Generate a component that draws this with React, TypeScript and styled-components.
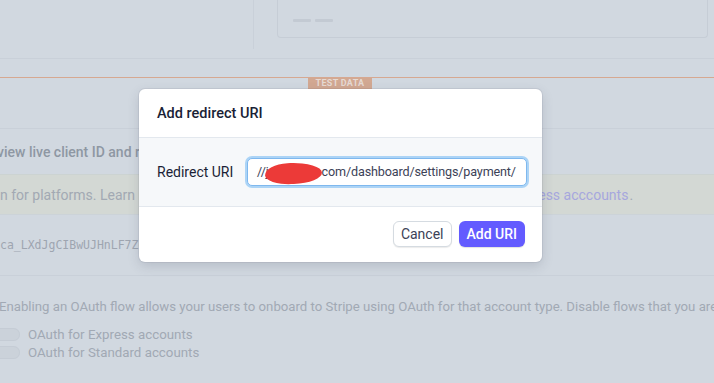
import styled, {createGlobalStyle} from 'styled-components';

const GlobalStyle = createGlobalStyle`
  html, body {
    margin: 0;
    padding: 0;
    background: #d1d8e0;
  }
  body {
    font-family: Roboto, "Noto Sans", sans-serif;
    -webkit-font-smoothing: antialiased;
  }
`;

const Page = styled.div`
  position: relative;
  width: 714px;
  height: 383px;
  overflow: hidden;
  background: #d1d8e0;
  color: #9ca4b0;
`;

const TopRow = styled.div`
  display: flex;
  height: 59px;
  border-bottom: 1px solid #c9d0d9;
  box-sizing: border-box;
`;

const SidePane = styled.div`
  width: 254px;
  height: 49px;
  border-right: 1px solid #c9d0d9;
  box-sizing: border-box;
`;

const Card = styled.div`
  margin-left: 23px;
  width: 431px;
  height: 38px;
  border: 1px solid #c6cdd6;
  border-top: none;
  border-radius: 0 0 4px 4px;
  box-sizing: border-box;
  display: flex;
  align-items: flex-end;
  gap: 4px;
  padding: 0 0 15px 15px;
`;

const Dash = styled.span`
  width: 18px;
  height: 3px;
  border-radius: 1px;
  background: #c3cad3;
`;

const TestBar = styled.div`
  display: flex;
  align-items: flex-start;
  margin-top: 18px;
  border-top: 1px solid #d6a891;
  height: 50px;
`;

const TestTag = styled.span`
  margin-left: 308px;
  width: 64px;
  height: 11px;
  line-height: 11px;
  background: #d2a892;
  color: #e6dad4;
  font-size: 9px;
  font-weight: 700;
  text-align: center;
  letter-spacing: 0.3px;
`;

const Section = styled.div`
  border-top: 1px solid #c9d0d9;
`;

const Lead = styled.div`
  height: 45px;
  display: flex;
  align-items: center;
  font-size: 14px;
  font-weight: 500;
  color: #8e97a3;
  margin-left: -3px;
  white-space: nowrap;
`;

const Banner = styled.div`
  height: 39px;
  display: flex;
  align-items: center;
  background: #d3d8d4;
  border-top: 1px solid #ccd3d2;
  border-bottom: 1px solid #ccd3d8;
  font-size: 14px;
  color: #a2a9b3;
  white-space: nowrap;
`;

const BannerLink = styled.span`
  color: #a6a7de;
  margin: 0 1px 0 18px;
`;

const KeyRow = styled.div`
  height: 60px;
  display: flex;
  align-items: center;
  font-family: "DejaVu Sans Mono", "Liberation Mono", monospace;
  font-size: 11.5px;
  color: #9ea5b0;
  border-bottom: 1px solid #c9d0d9;
  white-space: nowrap;
`;

const Description = styled.div`
  padding-top: 23px;
  font-size: 13.2px;
  color: #a1a9b4;
  white-space: nowrap;
  margin-left: -1px;
`;

const ToggleList = styled.div`
  margin-top: 14px;
  display: flex;
  flex-direction: column;
  gap: 5px;
`;

const ToggleRow = styled.div`
  display: flex;
  align-items: center;
  gap: 8px;
  font-size: 13.3px;
  color: #a1a9b4;
  height: 13px;
`;

const Switch = styled.span`
  width: 28px;
  height: 13px;
  margin-left: -8px;
  border-radius: 7px;
  background: #cbd2da;
  box-shadow: inset 0 0 0 1px #c5ccd5;
`;

const Modal = styled.div`
  position: absolute;
  left: 139px;
  top: 89px;
  width: 403px;
  background: #fff;
  border-radius: 6px;
  overflow: hidden;
  box-shadow: 0 0 0 1px rgba(60, 66, 87, 0.08), 0 4px 12px rgba(60, 66, 87, 0.18);
  color: #1a1f36;
`;

const ModalHeader = styled.div`
  height: 49px;
  box-sizing: border-box;
  display: flex;
  align-items: center;
  padding: 0 18px;
  font-size: 14.5px;
  font-weight: 500;
  border-bottom: 1px solid #e3e8ee;
`;

const ModalBody = styled.div`
  height: 69px;
  box-sizing: border-box;
  display: flex;
  align-items: center;
  padding: 0 15px 0 18px;
  background: #f6f8fa;
  border-bottom: 1px solid #e3e8ee;
`;

const Label = styled.span`
  width: 90px;
  font-size: 14px;
  color: #1a1f36;
`;

const Input = styled.div`
  flex: 1;
  height: 28px;
  line-height: 26px;
  box-sizing: border-box;
  padding: 0 8px 0 9px;
  background: #fff;
  border: 1px solid #7fb8ee;
  border-radius: 5px;
  box-shadow: 0 0 0 2px #acd4f6;
  font-size: 12.6px;
  letter-spacing: -0.15px;
  color: #3c4257;
  white-space: nowrap;
  overflow: hidden;
`;

const Redaction = styled.span`
  display: inline-block;
  vertical-align: middle;
  width: 57px;
  height: 21px;
  margin: 1px 0 0 -4px;
  background: #ec3a38;
  border-radius: 40% 55% 50% 45% / 55% 50% 50% 45%;
  transform: rotate(-2deg);
`;

const ModalFooter = styled.div`
  height: 55px;
  display: flex;
  align-items: center;
  justify-content: flex-end;
  gap: 7px;
  padding: 0 17px 2px;
  box-sizing: border-box;
`;

const Button = styled.button<{$primary?: boolean}>`
  height: 26px;
  padding: 0 ${p => (p.$primary ? '8px' : '7px')};
  border-radius: 6px;
  font-family: inherit;
  font-size: 14px;
  font-weight: ${p => (p.$primary ? 500 : 400)};
  cursor: pointer;
  border: ${p => (p.$primary ? 'none' : '1px solid #d5dbe1')};
  background: ${p => (p.$primary ? '#635bff' : '#fff')};
  color: ${p => (p.$primary ? '#fff' : '#3c4257')};
  box-shadow: ${p =>
    p.$primary ? '0 1px 1px rgba(0,0,0,0.12)' : '0 1px 1px rgba(0,0,0,0.08)'};
`;

const toggles = ['OAuth for Express accounts', 'OAuth for Standard accounts'];

export default function App() {
  return (
    <Page>
      <GlobalStyle />
      <TopRow>
        <SidePane />
        <Card>
          <Dash />
          <Dash />
        </Card>
      </TopRow>

      <TestBar>
        <TestTag>TEST DATA</TestTag>
      </TestBar>

      <Section>
        <Lead>view live client ID and redirect URIs, activate your account.</Lead>
        <Banner>
          n for platforms. Learn more about OAuth for connected accounts and
          <BannerLink>OAuth for Express acccounts</BannerLink>.
        </Banner>
        <KeyRow>ca_LXdJgCIBwUJHnLF7ZqVb3xKpR2mTw9</KeyRow>
        <Description>
          Enabling an OAuth flow allows your users to onboard to Stripe using OAuth for that
          account type. Disable flows that you are not using.
        </Description>
        <ToggleList>
          {toggles.map(label => (
            <ToggleRow key={label}>
              <Switch />
              {label}
            </ToggleRow>
          ))}
        </ToggleList>
      </Section>

      <Modal>
        <ModalHeader>Add redirect URI</ModalHeader>
        <ModalBody>
          <Label>Redirect URI</Label>
          <Input>
            //j
            <Redaction />
            com/dashboard/settings/payment/
          </Input>
        </ModalBody>
        <ModalFooter>
          <Button>Cancel</Button>
          <Button $primary>Add URI</Button>
        </ModalFooter>
      </Modal>
    </Page>
  );
}
